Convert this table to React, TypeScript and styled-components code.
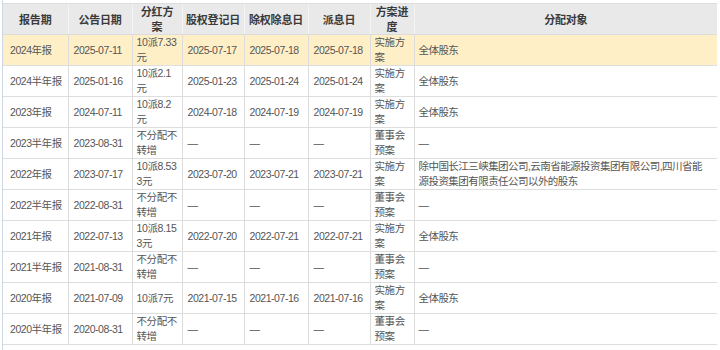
import React from "react";
import styled, { createGlobalStyle } from "styled-components";

const Global = createGlobalStyle`
  html, body { margin: 0; padding: 0; background: #fff; }
  body { font-family: "Liberation Sans", "Noto Sans CJK SC", sans-serif; }
`;

const Frame = styled.div`
  width: 718px;
  height: 350px;
  margin-left: 2px;
  border-left: 1px solid #cdd8e4;
  padding-top: 3px;
  box-sizing: border-box;
  overflow: hidden;
`;

const Table = styled.table`
  width: 714px;
  border-collapse: collapse;
  table-layout: fixed;
  border-bottom: 1px solid #dcdcdc;
`;

const HeadCell = styled.th`
  height: 30px;
  padding: 0;
  background: #e9e9e9;
  border-top: 1px solid #dddddd;
  border-bottom: 1px solid #dcdcdc;
  border-left: 1px solid #f4f4f4;
  &:first-child { border-left: none; }
  font-family: "Noto Sans CJK SC", sans-serif;
  font-size: 11px;
  font-weight: 700;
  line-height: 15px;
  letter-spacing: -0.2px;
  color: #3a3a3a;
  text-align: center;
  vertical-align: middle;
  white-space: nowrap;
`;

const Row = styled.tr<{ $hl?: boolean }>`
  background: ${(p) => (p.$hl ? "#ffefc6" : "#ffffff")};
`;

const Cell = styled.td<{ $pad?: number }>`
  height: 30px;
  padding: 0 0 0 ${(p) => p.$pad ?? 5}px;
  border-bottom: 1px solid #dedede;
  border-left: 1px solid #dcdcdc;
  &:first-child { border-left: none; }
  font-size: 10.5px;
  line-height: 15px;
  color: #555;
  text-align: left;
  vertical-align: middle;
  overflow: visible;
`;

const Text = styled.span`
  white-space: nowrap;
  letter-spacing: -0.45px;
`;

const Line = styled.div<{ $tight?: boolean }>`
  white-space: nowrap;
  letter-spacing: ${(p) => (p.$tight ? "-0.55px" : "-0.4px")};
`;

type R = {
  period: string;
  notice: string;
  plan: string[];
  reg: string;
  ex: string;
  pay: string;
  stage: string[];
  target: string[];
};

const D = "—";

const rows: R[] = [
  { period: "2024年报", notice: "2025-07-11", plan: ["10派7.33", "元"], reg: "2025-07-17", ex: "2025-07-18", pay: "2025-07-18", stage: ["实施方", "案"], target: ["全体股东"] },
  { period: "2024半年报", notice: "2025-01-16", plan: ["10派2.1", "元"], reg: "2025-01-23", ex: "2025-01-24", pay: "2025-01-24", stage: ["实施方", "案"], target: ["全体股东"] },
  { period: "2023年报", notice: "2024-07-11", plan: ["10派8.2", "元"], reg: "2024-07-18", ex: "2024-07-19", pay: "2024-07-19", stage: ["实施方", "案"], target: ["全体股东"] },
  { period: "2023半年报", notice: "2023-08-31", plan: ["不分配不", "转增"], reg: D, ex: D, pay: D, stage: ["董事会", "预案"], target: [D] },
  { period: "2022年报", notice: "2023-07-17", plan: ["10派8.53", "3元"], reg: "2023-07-20", ex: "2023-07-21", pay: "2023-07-21", stage: ["实施方", "案"], target: ["除中国长江三峡集团公司,云南省能源投资集团有限公司,四川省能", "源投资集团有限责任公司以外的股东"] },
  { period: "2022半年报", notice: "2022-08-31", plan: ["不分配不", "转增"], reg: D, ex: D, pay: D, stage: ["董事会", "预案"], target: [D] },
  { period: "2021年报", notice: "2022-07-13", plan: ["10派8.15", "3元"], reg: "2022-07-20", ex: "2022-07-21", pay: "2022-07-21", stage: ["实施方", "案"], target: ["全体股东"] },
  { period: "2021半年报", notice: "2021-08-31", plan: ["不分配不", "转增"], reg: D, ex: D, pay: D, stage: ["董事会", "预案"], target: [D] },
  { period: "2020年报", notice: "2021-07-09", plan: ["10派7元"], reg: "2021-07-15", ex: "2021-07-16", pay: "2021-07-16", stage: ["实施方", "案"], target: ["全体股东"] },
  { period: "2020半年报", notice: "2020-08-31", plan: ["不分配不", "转增"], reg: D, ex: D, pay: D, stage: ["董事会", "预案"], target: [D] },
];

const widths = [65, 64, 50, 62, 64, 62, 44, 303];

const Lines = ({ items, tight }: { items: string[]; tight?: boolean }) => (
  <>
    {items.map((t, i) => (
      <Line key={i} $tight={tight}>{t}</Line>
    ))}
  </>
);

export default function App() {
  return (
    <>
      <Global />
      <Frame>
        <Table>
          <colgroup>
            {widths.map((w, i) => (
              <col key={i} style={{ width: w }} />
            ))}
          </colgroup>
          <thead>
            <tr>
              <HeadCell>报告期</HeadCell>
              <HeadCell>公告日期</HeadCell>
              <HeadCell>分红方<br />案</HeadCell>
              <HeadCell>股权登记日</HeadCell>
              <HeadCell>除权除息日</HeadCell>
              <HeadCell>派息日</HeadCell>
              <HeadCell>方案进<br />度</HeadCell>
              <HeadCell>分配对象</HeadCell>
            </tr>
          </thead>
          <tbody>
            {rows.map((r, i) => (
              <Row key={i} $hl={i === 0}>
                <Cell $pad={7}><Text>{r.period}</Text></Cell>
                <Cell><Text>{r.notice}</Text></Cell>
                <Cell $pad={4}><Lines items={r.plan} /></Cell>
                <Cell><Text>{r.reg}</Text></Cell>
                <Cell><Text>{r.ex}</Text></Cell>
                <Cell><Text>{r.pay}</Text></Cell>
                <Cell $pad={4}><Lines items={r.stage} /></Cell>
                <Cell $pad={4}><Lines items={r.target} tight /></Cell>
              </Row>
            ))}
          </tbody>
        </Table>
      </Frame>
    </>
  );
}
